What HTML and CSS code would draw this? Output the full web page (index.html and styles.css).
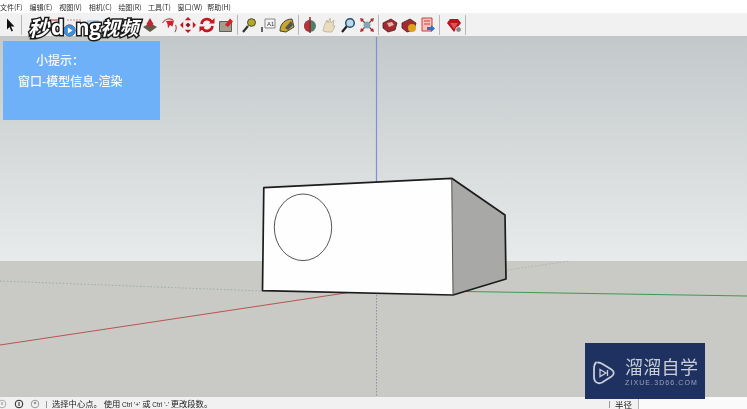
FILE: index.html
```html
<!DOCTYPE html>
<html lang="zh">
<head>
<meta charset="utf-8">
<title>SketchUp</title>
<link rel="stylesheet" href="styles.css">
</head>
<body>
<div class="app">
  <nav class="menubar">
    <span class="menu">文件(F)</span><span class="menu">编辑(E)</span><span class="menu">视图(V)</span><span class="menu">相机(C)</span><span class="menu">绘图(R)</span><span class="menu">工具(T)</span><span class="menu">窗口(W)</span><span class="menu">帮助(H)</span>
  </nav>
  <div class="toolbar">
    <svg class="tool" viewBox="0 0 16 16"><path d="M5 1.500v11l2.500-2.500 2 4.500 1.500-.7-2-4.300h3.500z" fill="#111"/></svg>
    <i class="sep sep-tools"></i>
    <svg class="tool" viewBox="0 0 16 16"><path d="M3 13 13 3" stroke="#a33" stroke-width="2"/></svg>
    <svg class="tool" viewBox="0 0 16 16"><path d="M2 3h12v10H2z" fill="none" stroke="#a33"/></svg>
    <svg class="tool" viewBox="0 0 16 16"><path d="M1 3h14" stroke="#c88" stroke-width="1" stroke-dasharray="2 1"/></svg>
    <svg class="tool" viewBox="0 0 16 16"><path d="M2 3h12v10H2z" fill="#b8cfe8"/></svg>
    <svg class="tool" viewBox="0 0 16 16"><path d="M2 3h12v10H2z" fill="#b8cfe8"/></svg>
    <svg class="tool" viewBox="0 0 16 16"><path d="M2 15 13 5" stroke="#a33" stroke-width="1.500"/></svg>
    <svg class="tool" viewBox="0 0 16 16"><path d="M1 10 8 6l7 4-7 5z" fill="#5f5c49"/><path d="M8 1 4.500 7 8 10.500 11.500 7z" fill="#c0272d"/></svg>
    <svg class="tool" viewBox="0 0 16 16"><path d="M1.500 6C4 1.500 9 1 12 3M14 15c1.500-2.500 1.500-5 .5-7" fill="none" stroke="#a85050" stroke-width="1.100"/><path d="M5 4l8-.5-1.500 6-2.500-1.500-2 3.500-.5-4.500z" fill="#d42027"/></svg>
    <svg class="tool" viewBox="0 0 16 16"><path d="M8 0l3.200 3.200H4.800zM8 16l-3.200-3.200h6.400zM0 8l3.200-3.200v6.400zM16 8l-3.200 3.200V4.800z" fill="#c4161c"/><path d="M5.500 8 8 5.500 10.500 8 8 10.500z" fill="#8a1a1e"/></svg>
    <svg class="tool" viewBox="0 0 16 16"><path d="M2.500 7A5.500 5.500 0 0 1 12.500 4.500M13.500 9A5.500 5.500 0 0 1 3.500 11.500" fill="none" stroke="#c4161c" stroke-width="2.600"/><path d="M10 6.500h5.500V1zM6 9.500H.5V15z" fill="#c4161c"/></svg>
    <svg class="tool" viewBox="0 0 16 16"><path d="M1.500 4.500h12v10h-12z" fill="#a29f8e" stroke="#5e5e55"/><path d="M7 8l5-6.500 3 3-5 5.500z" fill="#d42027"/></svg>
    <i class="sep"></i>
    <svg class="tool" viewBox="0 0 16 16"><path d="M2 15l5-6" stroke="#333" stroke-width="2.200"/><ellipse cx="10.500" cy="5.500" rx="4" ry="3.800" fill="#b5a925" stroke="#443"/></svg>
    <svg class="tool" viewBox="0 0 16 16"><path d="M5 2h10v9H5z" fill="#f4f4f4" stroke="#888"/><text class="glyph" x="7" y="9">A1</text><path d="M2 15v-5" stroke="#333" stroke-width="1.500"/></svg>
    <svg class="tool" viewBox="0 0 16 16"><path d="M1 14C1 7 6 2 13 2l2 8-8 5z" fill="#c8a828" stroke="#444"/><path d="M6 11l6-7 2 4-5 5z" fill="#555"/></svg>
    <i class="sep"></i>
    <svg class="tool" viewBox="0 0 16 16"><circle cx="8" cy="9" r="6" fill="#4f7f68"/><path d="M8 3a6 6 0 0 0-6 6 6 6 0 0 0 6 6z" fill="#b8343a"/><path d="M8 0v16" stroke="#8a2a30" stroke-width="1.500"/></svg>
    <svg class="tool" viewBox="0 0 16 16"><path d="M2 14C3 8 5 5 6 3l1 3 2-5 1 5 3-3-1 6 2 0-3 6H6z" fill="#e9dcc0" stroke="#b8a888" stroke-width=".7"/></svg>
    <svg class="tool" viewBox="0 0 16 16"><path d="M2 15l5-6" stroke="#222" stroke-width="2.200"/><circle cx="10" cy="6" r="4.300" fill="#bcd8ee" stroke="#26506e" stroke-width="1.500"/></svg>
    <svg class="tool" viewBox="0 0 16 16"><path d="M1 1l4 1-3 3zM15 1l-1 4-3-3zM1 15l1-4 3 3zM15 15l-4-1 3-3z" fill="#c4262c"/><path d="M3 3l10 10M13 3 3 13" stroke="#8a3036" stroke-width="1.200"/><circle cx="8" cy="8" r="3.500" fill="#7fa8b0"/></svg>
    <i class="sep"></i>
    <svg class="tool" viewBox="0 0 16 16"><path d="M1 6l8-4 6 4-2 7-7 2-5-4z" fill="#a32a2e" stroke="#4a2020" stroke-width=".8"/><path d="M5 6l5-1 2 3-5 2z" fill="#e7b0a8"/></svg>
    <svg class="tool" viewBox="0 0 16 16"><path d="M1 6l8-4 6 4-2 7-7 2-5-4z" fill="#a32a2e" stroke="#4a2020" stroke-width=".8"/><circle cx="11" cy="11" r="4" fill="#dca321"/></svg>
    <svg class="tool" viewBox="0 0 16 16"><path d="M2 1h10v13H2z" fill="#f0c4c0" stroke="#d43a3a"/><path d="M4 4h6M4 7h6" stroke="#d43a3a"/><path d="M7 10h4V8l4 3.500-4 3.500v-2H7z" fill="#2a70d0"/></svg>
    <i class="sep sep-last"></i>
    <svg class="tool" viewBox="0 0 16 16"><path d="M1 6l3-4h8l3 4-7 9z" fill="#b8141c"/><path d="M4 6h8l-4 6z" fill="#e05058"/><circle cx="12.500" cy="12.500" r="2.800" fill="#888" stroke="#fff" stroke-width=".7"/></svg>
    <i class="sep"></i>
  </div>
  <main class="viewport">
    <svg class="scene" viewBox="0 37 747 360" preserveAspectRatio="none">
      <defs>
        <linearGradient id="sky" x1="0" y1="0" x2="0" y2="1">
          <stop offset="0" stop-color="#c3c8ca"/>
          <stop offset="1" stop-color="#e8ebeb"/>
        </linearGradient>
      </defs>
      <rect x="0" y="37" width="747" height="224" fill="url(#sky)"/>
      <rect x="0" y="261" width="747" height="136" fill="#c9c9c5"/>
      <path d="M376.500 37V185" stroke="#7f8fd8" stroke-width="1.200"/>
      <path d="M376.500 295V397" stroke="#8c90a8" stroke-width="1" stroke-dasharray="1.500 1.500"/>
      <path d="M0 345 352 292" stroke="#b85450" stroke-width="1"/>
      <path d="M355 292 570 261" stroke="#b8a8a0" stroke-width=".8" stroke-dasharray="1.500 2"/>
      <path d="M0 281 262 291" stroke="#8fa898" stroke-width=".8" stroke-dasharray="1.500 2"/>
      <path d="M465 291.500 747 296" stroke="#3f9a50" stroke-width="1"/>
      <path d="M451.700 178.300 505 215 506 279 453 295z" fill="#a8a8a6"/>
      <path d="M263.800 187.700 451.700 178.300 453 295 262.500 290.700z" fill="#fefefe"/>
      <path d="M263.800 187.700 451.700 178.300 505 215 506 279 453 295 262.500 290.700z" fill="none" stroke="#1c1c1c" stroke-width="1.700" stroke-linejoin="round"/>
      <path d="M451.700 178.300 453 295" stroke="#444" stroke-width=".9"/>
      <ellipse cx="303" cy="227.300" rx="28.700" ry="33.300" fill="#fefefe" stroke="#555" stroke-width="1"/>
    </svg>
  </main>
  <footer class="statusbar">
    <svg class="stat stat-a" viewBox="0 0 10 10"><circle cx="5" cy="5" r="3.800" fill="none" stroke="#aaa"/><path d="M5 3v3" stroke="#888"/></svg>
    <svg class="stat" viewBox="0 0 10 10"><circle cx="5" cy="5" r="3.800" fill="none" stroke="#222"/><path d="M5 3v4" stroke="#222"/></svg>
    <svg class="stat" viewBox="0 0 10 10"><circle cx="5" cy="5" r="3.800" fill="none" stroke="#999"/><circle cx="5" cy="4" r="1.300" fill="#999"/></svg>
    <i class="stat-sep"></i>
    <span class="hint">选择中心点。 使用 <small class="key">Ctrl '+'</small> 或 <small class="key">Ctrl '-'</small> 更改段数。</span>
    <i class="stat-sep right"></i>
    <span class="label">半径</span>
    <span class="value"></span>
  </footer>
  <aside class="tip">
    <p class="tip-title">小提示：</p>
    <p class="tip-body">窗口-模型信息-渲染</p>
  </aside>
  <div class="brand">
    <span class="brand-cn brand-first">秒</span><span class="brand-lat">d</span><span class="brand-play"><svg viewBox="0 0 20 20"><circle cx="10" cy="10" r="8.500" fill="#3b8fe0" stroke="#111" stroke-width="1.500"/><path d="M7.500 5.500 14.500 10 7.500 14.500z" fill="#fff"/></svg></span><span class="brand-lat">ng</span><span class="brand-cn">视频</span>
  </div>
  <div class="badge">
    <svg class="badge-icon" viewBox="0 0 22 24"><path d="M3 1.500C1.500 3 1 5 1 8v8c0 5 4 7.500 8 5.500l9.500-6c3-2 3-5 0-7l-9-5.500C7.500 1.800 6 1.500 5 1.500" fill="none" stroke="#c9ced8" stroke-width="1.800" stroke-linecap="round"/><path d="M7 8.500l6 3.500-6 3.500z" fill="none" stroke="#c9ced8" stroke-width="1.300"/><path d="M14.500 9v6" stroke="#c9ced8" stroke-width="1.300"/></svg>
    <div class="badge-text">
      <span class="badge-cn">溜溜自学</span>
      <span class="badge-en">ZIXUE.3D66.COM</span>
    </div>
  </div>
</div>
</body>
</html>
```
FILE: styles.css
```css
* { box-sizing: border-box; margin: 0; padding: 0; }
html, body { width: 747px; height: 409px; overflow: hidden; background: #f0f0f0; }
body { font-family: "Noto Sans CJK SC", "Liberation Sans", sans-serif; }
.app { position: relative; width: 747px; height: 409px; display: flex; flex-direction: column; overflow: hidden; }

.menubar { height: 13px; flex: none; display: flex; gap: 5px; background: #fff; padding-top: 1px; font-size: 7px; color: #2a2a2a; line-height: 13px; }
.menu { width: 24.600px; white-space: nowrap; filter: blur(.25px); }

.toolbar { height: 24px; flex: none; display: flex; align-items: center; background: #f1f1f1; border-bottom: 1px solid #c4c4c4; padding-left: 2px; gap: 3px; filter: blur(.35px); }
.tool { width: 16px; height: 16px; flex: none; }
.sep { width: 1px; height: 20px; background: #b8b8b8; flex: none; }
.sep-tools { margin-right: 3px; }
.sep-last { margin-right: 3px; }
.glyph { font-size: 6px; font-family: "Liberation Sans", sans-serif; fill: #333; }

.viewport { flex: 1; min-height: 0; }
.scene { display: block; width: 100%; height: 100%; filter: blur(.3px); }

.statusbar { height: 12px; flex: none; display: flex; align-items: center; background: #f1f1f1; font-size: 8.300px; color: #222; padding-top: 2px; }
.stat { width: 10px; height: 10px; flex: none; margin-right: 6px; filter: blur(.3px); }
.stat-a { margin-left: -3px; margin-right: 7px; }
.stat-sep { width: 1px; height: 7px; background: #999; margin-right: 5px; flex: none; }
.stat-sep.right { margin-left: auto; }
.hint { white-space: nowrap; filter: blur(.25px); line-height: 10px; }
.key { font-size: 6.500px; font-family: "Liberation Sans", sans-serif; }
.label { width: 23px; font-size: 8.500px; white-space: nowrap; line-height: 10px; filter: blur(.25px); }
.value { width: 109px; height: 12px; margin-top: -2px; background: #fafafa; border-left: 1px solid #b5b5b5; flex: none; }

.tip { position: absolute; left: 3px; top: 41px; width: 157px; height: 79px; background: #6fb1f8; color: #f6f9fd; font-size: 12px; font-weight: 500; filter: blur(.2px); }
.tip-title { position: absolute; left: 33px; top: 11px; line-height: 16px; white-space: nowrap; }
.tip-body { position: absolute; left: 15px; top: 32px; line-height: 16px; white-space: nowrap; }

.brand { position: absolute; left: 28px; top: 14px; height: 26px; display: flex; align-items: center; color: #fff; font-weight: 700; -webkit-text-stroke: 3px #1a1a1a; paint-order: stroke fill; filter: blur(.3px); white-space: nowrap; }
.brand-cn { font-size: 19px; line-height: 26px; font-style: italic; }
.brand-first { width: 23px; font-size: 21px; }
.brand-lat { font-size: 21px; font-family: "Open Sans", sans-serif; line-height: 26px; letter-spacing: -.5px; }
.brand-play { width: 13px; height: 13px; display: block; margin: 6px 0 0 -1px; }
.brand-play svg { display: block; width: 13px; height: 13px; }

.badge { position: absolute; left: 585px; top: 343px; width: 120px; height: 56px; background: #1e3160; display: flex; align-items: center; padding-left: 8px; gap: 10px; filter: blur(.3px); }
.badge-icon { width: 22px; height: 24px; flex: none; margin-top: 3px; }
.badge-text { display: flex; flex-direction: column; color: #c9ced8; }
.badge-cn { font-size: 18px; line-height: 20px; letter-spacing: .3px; white-space: nowrap; }
.badge-en { font-size: 7px; line-height: 9px; letter-spacing: 1.100px; font-family: "Liberation Sans", sans-serif; color: #9aa3b8; margin-top: 2px; white-space: nowrap; }
```
